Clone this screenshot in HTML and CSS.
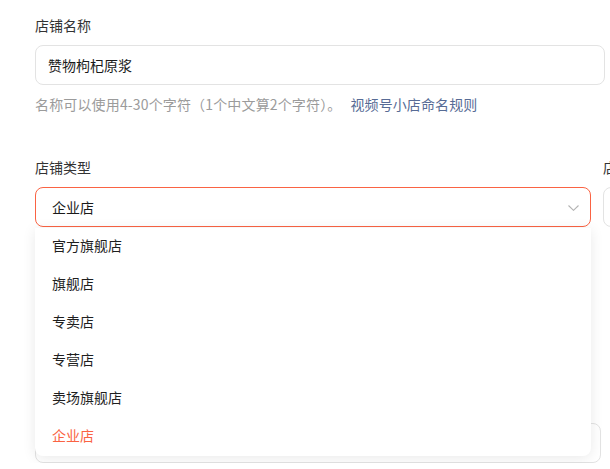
FILE: index.html
```html
<!DOCTYPE html>
<html lang="zh-CN">
<head>
<meta charset="utf-8">
<link rel="stylesheet" href="styles.css">
</head>
<body>
<div class="page">
  <div class="field name-field">
    <div class="label">店铺名称</div>
    <div class="input name-input">赞物枸杞原浆</div>
    <div class="hint"><span class="hint-text">名称可以使用4-30个字符（1个中文算2个字符）。</span><a class="link">视频号小店命名规则</a></div>
  </div>

  <div class="row">
    <div class="field type-field">
      <div class="label">店铺类型</div>
      <div class="select-wrap">
        <div class="select">
          <span>企业店</span>
          <svg class="chevron" width="11" height="6" viewBox="0 0 11 6"><path d="M0.5 0.5 L5.5 5.3 L10.5 0.5" fill="none" stroke="#b3b3b3" stroke-width="1.1"/></svg>
        </div>
        <ul class="dropdown">
          <li>官方旗舰店</li>
          <li>旗舰店</li>
          <li>专卖店</li>
          <li>专营店</li>
          <li>卖场旗舰店</li>
          <li class="active">企业店</li>
        </ul>
      </div>
      <div class="input next-input"></div>
    </div>
    <div class="field side-field">
      <div class="label">店铺品牌</div>
      <div class="input side-input"></div>
    </div>
  </div>
</div>
</body>
</html>
```

FILE: styles.css
```css
html, body {
  margin: 0;
  padding: 0;
  background: #fff;
  overflow: hidden;
}
body {
  font-family: "Noto Sans CJK SC", "Noto Sans", sans-serif;
  font-size: 14px;
  color: #333;
}
.page {
  padding: 14px 0 0 35px;
  width: 1000px;
}
.label {
  line-height: 22px;
  height: 22px;
  color: #333;
}
.field .input,
.field .select-wrap {
  margin-top: 9px;
}
.input {
  box-sizing: border-box;
  height: 40px;
  border: 1px solid #e3e3e3;
  border-radius: 8px;
  padding: 0 12px;
  line-height: 38px;
  color: #1a1a1a;
  background: #fff;
}
.name-input {
  width: 570px;
}
.hint {
  margin-top: 9px;
  line-height: 20px;
  color: #9b9b9b;
}
.hint-text {
  letter-spacing: 0.15px;
}
.link {
  color: #576b95;
  text-decoration: none;
  margin-left: 9px;
  letter-spacing: 0.1px;
}
.row {
  display: flex;
  gap: 12px;
  margin-top: 42px;
}
.type-field {
  width: 556px;
  flex: none;
}
.side-field {
  width: 300px;
  flex: none;
}
.select-wrap {
  position: relative;
}
.select {
  box-sizing: border-box;
  height: 40px;
  border: 1px solid #fa6343;
  border-radius: 8px;
  padding: 0 11px 0 16px;
  display: flex;
  align-items: center;
  justify-content: space-between;
  color: #1a1a1a;
  background: #fff;
}
.chevron {
  display: block;
  margin-top: 2px;
}
.dropdown {
  position: absolute;
  left: 0;
  right: 0;
  top: 41px;
  margin: 0;
  padding: 0;
  list-style: none;
  background: #fff;
  border-radius: 0 0 8px 8px;
  box-shadow: 0 2px 14px rgba(0, 0, 0, 0.09);
  z-index: 5;
}
.dropdown li {
  box-sizing: border-box;
  height: 38px;
  line-height: 34px;
  padding-left: 17px;
  color: #1f1f1f;
}
.dropdown li.active {
  color: #fa6343;
}
.next-input {
  width: 566px;
  margin-top: 196px !important;
}
```
